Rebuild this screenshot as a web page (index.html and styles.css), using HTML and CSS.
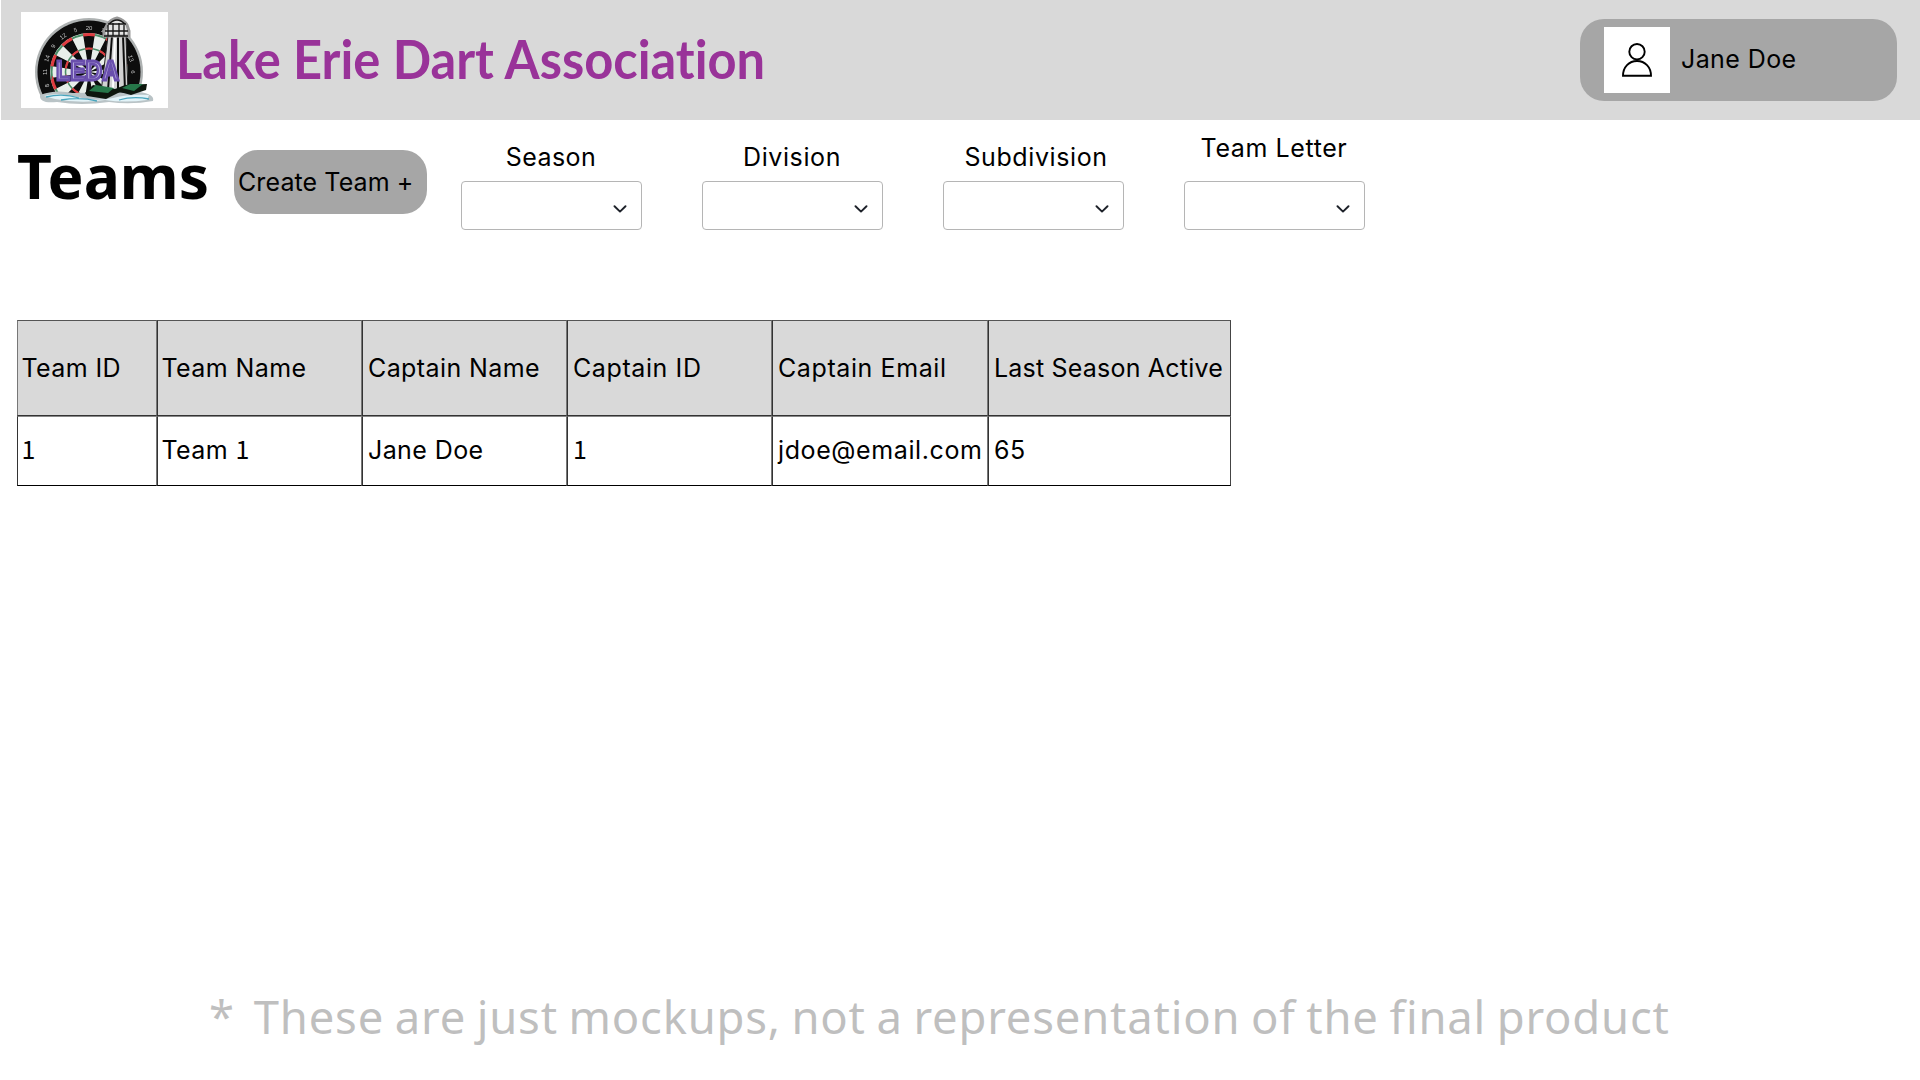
FILE: index.html
```
<!DOCTYPE html>
<html lang="en">
<head>
<meta charset="utf-8">
<title>Lake Erie Dart Association - Teams</title>
<link rel="stylesheet" href="styles.css">
</head>
<body>
<header class="topbar">
  <svg class="logo" viewBox="0 0 147 96" role="img" aria-label="LEDA">
    <defs>
      <clipPath id="board"><path d="M10 0H130V72L118 86H22L10 80Z"/></clipPath>
      <filter id="soft"><feGaussianBlur stdDeviation="0.6"/></filter>
    </defs>
    <rect width="147" height="96" fill="#fff"/>
    <g filter="url(#soft)">
      <g clip-path="url(#board)">
        <circle cx="68" cy="60" r="54" fill="#aeb2b2"/>
        <circle cx="68" cy="60" r="51.5" fill="#080808"/>
        <circle cx="68" cy="60" r="39" fill="#e8eeea"/>
        <circle cx="68" cy="60" r="18.5" fill="none" stroke="#0b0b0b" stroke-width="37" pathLength="20" stroke-dasharray="1 1" transform="rotate(-99 68 60)"/>
        <circle cx="68" cy="60" r="37.5" fill="none" stroke="#4c8d68" stroke-width="2"/>
        <circle cx="68" cy="60" r="37.5" fill="none" stroke="#df3b40" stroke-width="3" pathLength="20" stroke-dasharray="1 1" transform="rotate(-99 68 60)"/>
        <circle cx="68" cy="60" r="23.5" fill="none" stroke="#4c8d68" stroke-width="1.6"/>
        <circle cx="68" cy="60" r="23.5" fill="none" stroke="#df3b40" stroke-width="2.2" pathLength="20" stroke-dasharray="1 1" transform="rotate(-99 68 60)"/>
        <g class="board-number" transform="translate(68 60)">
          <text y="-42">20</text>
          <text y="-42" transform="rotate(-18)">5</text>
          <text y="-42" transform="rotate(-36)">12</text>
          <text y="-42" transform="rotate(-54)">9</text>
          <text y="-42" transform="rotate(-72)">14</text>
          <text y="-42" transform="rotate(-90)">11</text>
          <text y="-42" transform="rotate(-108)">8</text>
          <text y="-42" transform="rotate(18)">1</text>
          <text y="-42" transform="rotate(72)">13</text>
          <text y="-42" transform="rotate(90)">6</text>
        </g>
      </g>
      <path d="M19 83Q34 77 52 81L118 80Q134 82 132 89Q110 93 88 90Q60 94 36 90Q18 92 19 83Z" fill="#b9c3c6"/>
      <path d="M23 84Q36 80 56 85T92 86T128 83L126 88Q104 91 84 88Q60 92 34 87Z" fill="#e2f3f8"/>
      <path d="M25 85Q42 81 58 86M40 88Q60 85 76 89M98 88Q112 84 128 87" fill="none" stroke="#4aa5bd" stroke-width="1.3"/>
      <path d="M87 24H105L107 80H80Z" fill="#d2d2d2" stroke="#222" stroke-width="1"/>
      <path d="M91 24L87 78M97 24V78M102 24L104 78" stroke="#111" stroke-width="2" fill="none"/>
      <path d="M94 26L92 76" stroke="#fff" stroke-width="2"/>
      <path d="M83 19L86 13Q90 7 96 6Q103 8 106 13L108 19V24H83Z" fill="#e4e4e4" stroke="#999" stroke-width="3"/>
      <path d="M84 19H107M83 24H107M87 12H105M87 13V24M92 11V24M98 11V24M103 13V24M88 12Q96 4 104 12" fill="none" stroke="#151515" stroke-width="1.3"/>
      <path d="M64 81L72 73L94 77L104 73L126 72L125 78L110 83L99 80L85 87L66 84Z" fill="#0d1510"/>
      <path d="M68 79L75 73L93 76L87 81Z M101 76L109 72L122 72L113 79Z" fill="#26774a"/>
      <text class="logo-word" x="35" y="68" textLength="63" lengthAdjust="spacingAndGlyphs">LEDA</text>
    </g>
  </svg>
  <div class="brand">Lake Erie Dart Association</div>
  <div class="user">
    <span class="avatar">
      <svg viewBox="0 0 66 66" fill="none" stroke="#000" stroke-width="1.9">
        <circle cx="33" cy="24.7" r="7.7"/>
        <path d="M19 48.8C19 40 25 34 33 34S47 40 47 48.8Z"/>
      </svg>
    </span>
    <span class="user-name">Jane Doe</span>
  </div>
</header>

<main>
  <section class="toolbar">
    <h1>Teams</h1>
    <button class="create" type="button">Create Team +</button>
    <div class="filters">
      <div class="filter"><span class="label">Season</span><div class="select"><svg viewBox="0 0 14 8"><path d="M1.5 1.2L7 6.6L12.5 1.2"/></svg></div></div>
      <div class="filter"><span class="label wide">Division</span><div class="select"><svg viewBox="0 0 14 8"><path d="M1.5 1.2L7 6.6L12.5 1.2"/></svg></div></div>
      <div class="filter"><span class="label wide shifted">Subdivision</span><div class="select"><svg viewBox="0 0 14 8"><path d="M1.5 1.2L7 6.6L12.5 1.2"/></svg></div></div>
      <div class="filter"><span class="label wide raised">Team Letter</span><div class="select"><svg viewBox="0 0 14 8"><path d="M1.5 1.2L7 6.6L12.5 1.2"/></svg></div></div>
    </div>
  </section>

  <table class="teams">
    <colgroup><col class="c-id"><col class="c-std"><col class="c-std"><col class="c-std"><col class="c-mail"><col class="c-last"></colgroup>
    <thead>
      <tr><th>Team ID</th><th>Team Name</th><th>Captain Name</th><th class="wide">Captain ID</th><th class="wide">Captain Email</th><th class="tight">Last Season Active</th></tr>
    </thead>
    <tbody>
      <tr><td><span class="one">1</span></td><td>Team <span class="one">1</span></td><td>Jane Doe</td><td><span class="one">1</span></td><td class="wide">jdoe@email.com</td><td>65</td></tr>
    </tbody>
  </table>
</main>

<footer class="note"><span>*</span><span>These are just mockups, not a representation of the final product</span></footer>
</body>
</html>
```
FILE: styles.css
```
* { box-sizing: border-box; }

body {
  margin: 0;
  height: 1080px;
  display: flex;
  flex-direction: column;
  overflow: hidden;
  background: #fff;
  color: #000;
  font: 25px/30px Inter, "Noto Sans", sans-serif;
  letter-spacing: 0.4px;
}

.topbar {
  height: 120px;
  margin-left: 1px;
  padding: 0 23px 0 20px;
  display: flex;
  align-items: center;
  background: #d9d9d9;
}

.logo { width: 147px; height: 96px; flex: none; }
.board-number text {
  font: 6px "Liberation Sans", sans-serif;
  fill: #c9c9c9;
  text-anchor: middle;
  letter-spacing: 0;
}
.logo-word {
  font: bold 28px "Liberation Sans", sans-serif;
  fill: #b9aede;
  stroke: #6a50ad;
  stroke-width: 2.8px;
  letter-spacing: 0;
}

.brand {
  margin: 0 auto 4px 8px;
  color: #993399;
  font: bold 53.4px/64px Lato, sans-serif;
  font-variant-ligatures: none;
  letter-spacing: 0;
  white-space: nowrap;
  transform: scaleX(0.948);
  transform-origin: left center;
}

.user {
  width: 317px;
  height: 82px;
  padding-left: 24px;
  display: flex;
  align-items: center;
  gap: 11px;
  border-radius: 24px;
  background: #a6a6a6;
}
.avatar { width: 66px; height: 66px; background: #fff; }
.avatar svg { display: block; }
.user-name { padding-bottom: 2px; }

.toolbar {
  height: 200px;
  padding-left: 17px;
  display: flex;
  align-items: flex-start;
}
h1 {
  width: 217px;
  margin: 20px 0 0;
  font-family: "Noto Sans", sans-serif;
  font-size: 60.4px;
  line-height: 72px;
  letter-spacing: 0;
}
.create {
  width: 193px;
  height: 64px;
  margin-top: 30px;
  padding: 0 0 0 4px;
  border: 0;
  border-radius: 24px;
  background: #a6a6a6;
  color: inherit;
  font: inherit;
  letter-spacing: 0.1px;
  text-align: left;
}
.filters { display: flex; gap: 60px; margin: 22px 0 0 33.5px; }
.filter {
  width: 181px;
  display: flex;
  flex-direction: column;
  align-items: center;
}
.label { height: 39px; white-space: nowrap; }
.raised { margin: -9px 0 9px; }
.shifted { padding-left: 6px; }
.wide { letter-spacing: 0.6px; }
.tight { letter-spacing: 0.2px; }
.select {
  width: 181px;
  height: 49px;
  padding: 6px 14px 0 0;
  display: flex;
  align-items: center;
  justify-content: flex-end;
  border: 1px solid #b5b5b5;
  border-radius: 4px;
}
.select svg {
  width: 14px;
  height: 8px;
  fill: none;
  stroke: #1d2129;
  stroke-width: 1.9;
  stroke-linecap: round;
  stroke-linejoin: round;
}

.teams {
  width: 1214px;
  margin-left: 17px;
  table-layout: fixed;
  border-collapse: separate;
  border-spacing: 0;
}
.c-id { width: 140px; }
.c-std { width: 205px; }
.c-mail { width: 216px; }
.c-last { width: 243px; }
th, td {
  padding: 0 0 0 5px;
  border: 1px solid #333;
  border-right-color: #777;
  font-weight: 400;
  text-align: left;
  white-space: nowrap;
}
th { height: 96px; background: #d9d9d9; border-top-color: #555; }
td { height: 70px; padding-bottom: 2px; border-top-color: #888; border-bottom-color: #000; }
th:nth-child(-n+2), td:nth-child(-n+2) { padding-left: 3.5px; }
th:last-child, td:last-child { border-right-color: #444; }
th:first-child { border-left-color: #777; }
.one { font-family: "Noto Sans CJK JP", sans-serif; line-height: 1; }

.note {
  margin: auto 0 34px 209px;
  display: flex;
  gap: 19px;
  color: #bfbfbf;
  font: 45.4px/60px "Noto Sans", sans-serif;
  letter-spacing: 0.8px;
  word-spacing: -1.9px;
  white-space: nowrap;
}
```
